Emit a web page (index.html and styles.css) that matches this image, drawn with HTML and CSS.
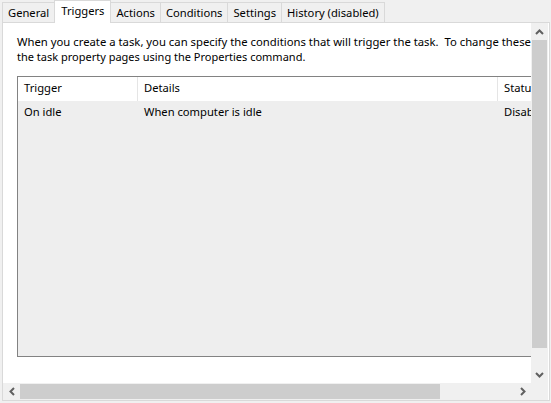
FILE: index.html
```html
<!DOCTYPE html>
<html lang="en">
<head>
    <meta charset="UTF-8"/>
    <title>Task Properties - Triggers</title>
    <link rel="stylesheet" href="styles.css">
</head>
<body>
<div class="tabs">
    <div class="tab">General</div>
    <div class="tab active">Triggers</div>
    <div class="tab">Actions</div>
    <div class="tab">Conditions</div>
    <div class="tab">Settings</div>
    <div class="tab">History (disabled)</div>
</div>
<div class="panel">
    <div class="view">
        <div class="content">
            <p class="intro">When you create a task, you can specify the conditions that will trigger the task.&nbsp; To change these triggers, open</p>
            <p class="intro">the task property pages using the Properties command.</p>
            <div class="list">
                <div class="row head">
                    <div class="col c-trigger">Trigger</div>
                    <div class="col c-details">Details</div>
                    <div class="col c-status">Status</div>
                </div>
                <div class="row">
                    <div class="col c-trigger">On idle</div>
                    <div class="col c-details">When computer is idle</div>
                    <div class="col c-status">Disabled</div>
                </div>
            </div>
        </div>
    </div>
    <div class="vbar">
        <div class="arrow">
            <svg width="9" height="6" viewBox="0 0 9 6"><polyline points="1,5 4.5,1.5 8,5" fill="none" stroke="#606060" stroke-width="2"/></svg>
        </div>
        <div class="thumb"></div>
        <div class="track"></div>
        <div class="arrow">
            <svg width="9" height="6" viewBox="0 0 9 6"><polyline points="1,1 4.5,4.5 8,1" fill="none" stroke="#606060" stroke-width="2"/></svg>
        </div>
    </div>
    <div class="hbar">
        <div class="arrow">
            <svg width="6" height="9" viewBox="0 0 6 9"><polyline points="5,1 1.5,4.5 5,8" fill="none" stroke="#606060" stroke-width="2"/></svg>
        </div>
        <div class="thumb"></div>
        <div class="track"></div>
        <div class="arrow">
            <svg width="6" height="9" viewBox="0 0 6 9"><polyline points="1,1 4.5,4.5 1,8" fill="none" stroke="#606060" stroke-width="2"/></svg>
        </div>
    </div>
    <div class="corner"></div>
</div>
</body>
</html>
```

FILE: styles.css
```css
* {
    margin: 0;
    padding: 0;
    box-sizing: border-box;
}

body {
    width: 551px;
    height: 403px;
    overflow: hidden;
    background-color: #f0f0f0;
    font-family: 'Noto Sans', 'Open Sans', sans-serif;
    font-size: 11.2px;
    color: #000;
}

/* tab strip */
.tabs {
    display: flex;
    align-items: flex-end;
    height: 22px;
    padding-left: 2px;
}

.tab {
    height: 20px;
    line-height: 19px;
    padding: 0 5px;
    border: 1px solid #d9d9d9;
    border-bottom: none;
    margin-right: -1px;
    background-color: #f0f0f0;
}

.tab.active {
    height: 23px;
    line-height: 20px;
    margin-bottom: -1px;
    padding: 0 6px;
    background-color: #fff;
    position: relative;
    z-index: 1;
}

/* page body with its scrollbars */
.panel {
    margin-left: 2px;
    width: 548px;
    height: 379px;
    border: 1px solid #d9d9d9;
    background-color: #fff;
    display: grid;
    grid-template-columns: 528px 17px;
    grid-template-rows: 360px 17px;
}

.view {
    overflow: hidden;
}

.content {
    width: 700px;
    padding: 11px 0 0 14px;
}

.intro {
    line-height: 15px;
    white-space: nowrap;
}

.intro + .intro {
    font-size: 11px;
}

.intro:first-child {
    font-size: 11.3px;
}

.list {
    margin-top: 12px;
    width: 620px;
    height: 281px;
    border: 1px solid #828282;
    background-color: #eeeeee;
}

.row {
    display: flex;
    height: 23px;
    line-height: 21px;
}

.row.head {
    height: 24px;
    line-height: 22px;
    background-color: #fff;
}

.col {
    padding-left: 6px;
    white-space: nowrap;
    overflow: hidden;
}

.head .col {
    border-right: 1px solid #e5e5e5;
}

.c-trigger {
    width: 120px;
}

.c-details {
    width: 360px;
}

.c-status {
    width: 100px;
}

/* scrollbars */
.vbar,
.hbar {
    display: flex;
    background-color: #f0f0f0;
}

.vbar {
    flex-direction: column;
}

.arrow {
    width: 17px;
    height: 17px;
    flex: none;
    display: flex;
    align-items: center;
    justify-content: center;
}

.thumb {
    background-color: #cdcdcd;
    flex: none;
}

.vbar .thumb {
    height: 308px;
    margin: 0 1px;
}

.hbar .thumb {
    width: 420px;
    margin: 1px 0;
}

.track {
    flex: 1;
}

.corner {
    background-color: #f0f0f0;
}
```
